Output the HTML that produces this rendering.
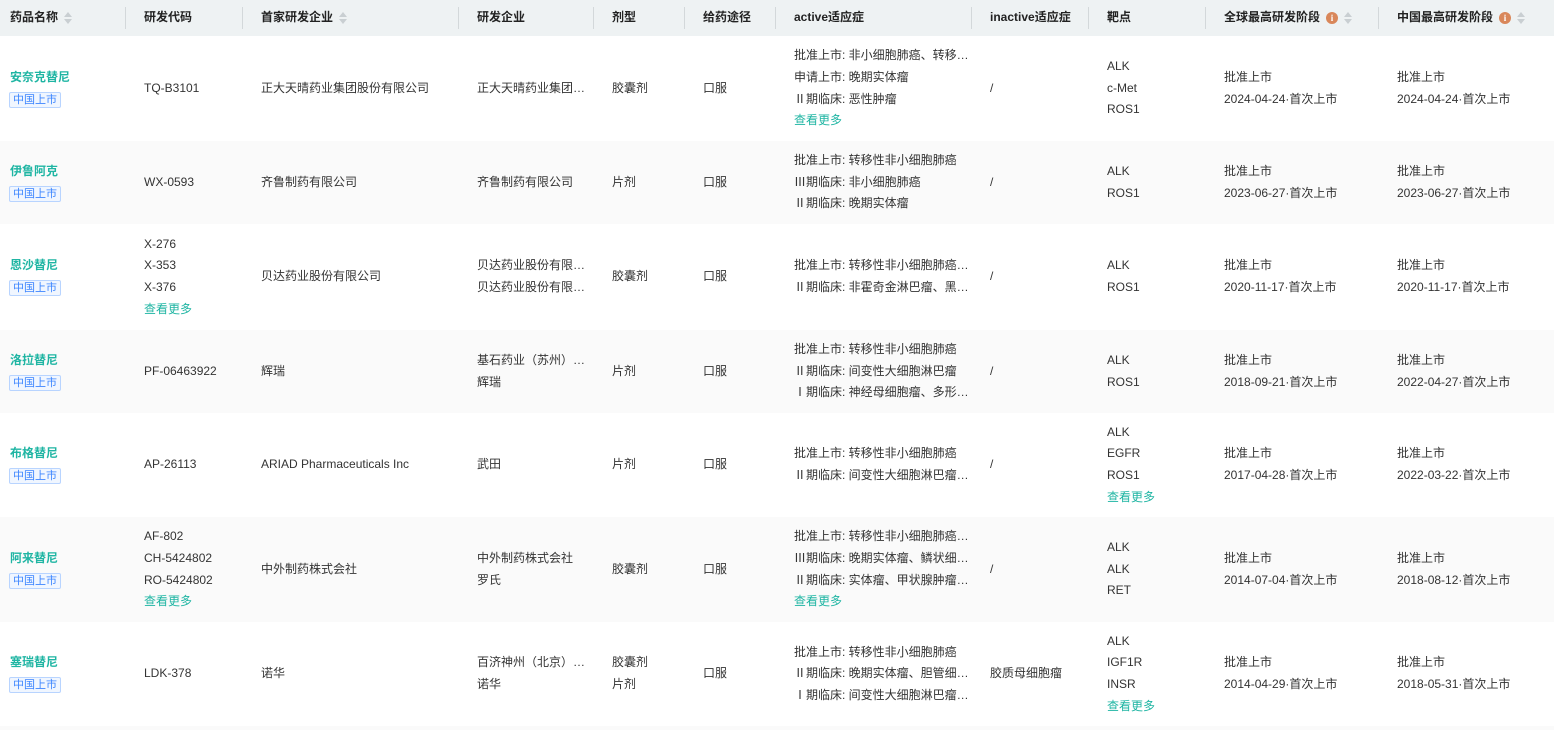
<!DOCTYPE html>
<html><head><meta charset="utf-8"><style>
*{box-sizing:border-box;margin:0;padding:0}
body{width:1554px;height:730px;overflow:hidden;background:#fafafa;font-family:"Liberation Sans","Noto Sans CJK SC",sans-serif;font-size:12px;color:#333}
table{border-collapse:collapse;table-layout:fixed;width:1554px}
td,th{padding:0 0 0 19px;vertical-align:middle;line-height:21.6px;white-space:nowrap;overflow:hidden;text-overflow:ellipsis;text-align:left}
td:first-child,th:first-child{padding-left:10px}
th{height:36px;background:#eef2f3;font-weight:bold;color:#222;position:relative}
th.s::before{content:"";position:absolute;left:0;top:7px;height:22px;border-left:1px solid #d3d8da}
tr.w td{background:#fff}
tr.g td{background:#fafafa}
.n{color:#1fb5a3;font-weight:bold}
.tag{display:inline-block;border:1px solid #b8d4ff;background:#f0f6ff;color:#3d86ff;font-size:11px;line-height:14px;padding:0 3px;border-radius:2px;margin-top:2px;margin-left:-1px}
.l{color:#1fb5a3}
.e{overflow:hidden;text-overflow:ellipsis;white-space:nowrap}
.sort{display:inline-block;vertical-align:middle;margin-left:6px;width:8px;height:14px;position:relative}
.sort::before{content:"";position:absolute;left:0;top:1px;border:4px solid transparent;border-bottom:5px solid #c9cfd2;border-top:0}
.sort::after{content:"";position:absolute;left:0;top:8px;border:4px solid transparent;border-top:5px solid #c9cfd2;border-bottom:0}
.i{display:inline-block;vertical-align:middle;width:12px;height:12px;border-radius:50%;background:#d9875a;color:#fff;font-size:9px;line-height:12px;text-align:center;margin-left:6px;font-family:"Liberation Serif",serif;font-weight:bold}
</style></head><body>
<table>
<colgroup><col style="width:125px"><col style="width:117px"><col style="width:216px"><col style="width:135px"><col style="width:91px"><col style="width:91px"><col style="width:196px"><col style="width:117px"><col style="width:117px"><col style="width:173px"><col style="width:176px"></colgroup>
<tr><th>药品名称<span class="sort"></span></th><th class="s">研发代码</th><th class="s">首家研发企业<span class="sort"></span></th><th class="s">研发企业</th><th class="s">剂型</th><th class="s">给药途径</th><th class="s">active适应症</th><th class="s">inactive适应症</th><th class="s">靶点</th><th class="s">全球最高研发阶段<span class="i">i</span><span class="sort"></span></th><th class="s">中国最高研发阶段<span class="i">i</span><span class="sort"></span></th></tr>

<tr class="w" style="height:105px"><td><div class="n">安奈克替尼</div><span class="tag">中国上市</span></td><td>TQ-B3101</td><td>正大天晴药业集团股份有限公司</td><td><div class="e">正大天晴药业集团股份有限公司</div></td><td>胶囊剂</td><td>口服</td><td><div class="e">批准上市: 非小细胞肺癌、转移性非小细胞肺癌</div><div>申请上市: 晚期实体瘤</div><div>Ⅱ期临床: 恶性肿瘤</div><div class="l">查看更多</div></td><td>/</td><td>ALK<br>c-Met<br>ROS1</td><td>批准上市<br>2024-04-24·首次上市</td><td>批准上市<br>2024-04-24·首次上市</td></tr>

<tr class="g" style="height:83px"><td><div class="n">伊鲁阿克</div><span class="tag">中国上市</span></td><td>WX-0593</td><td>齐鲁制药有限公司</td><td>齐鲁制药有限公司</td><td>片剂</td><td>口服</td><td>批准上市: 转移性非小细胞肺癌<br>Ⅲ期临床: 非小细胞肺癌<br>Ⅱ期临床: 晚期实体瘤</td><td>/</td><td>ALK<br>ROS1</td><td>批准上市<br>2023-06-27·首次上市</td><td>批准上市<br>2023-06-27·首次上市</td></tr>

<tr class="w" style="height:106px"><td><div class="n">恩沙替尼</div><span class="tag">中国上市</span></td><td>X-276<br>X-353<br>X-376<div class="l">查看更多</div></td><td>贝达药业股份有限公司</td><td><div class="e">贝达药业股份有限公司</div><div class="e">贝达药业股份有限公司</div></td><td>胶囊剂</td><td>口服</td><td><div class="e">批准上市: 转移性非小细胞肺癌、非小细胞肺癌</div><div class="e">Ⅱ期临床: 非霍奇金淋巴瘤、黑色素瘤</div></td><td>/</td><td>ALK<br>ROS1</td><td>批准上市<br>2020-11-17·首次上市</td><td>批准上市<br>2020-11-17·首次上市</td></tr>

<tr class="g" style="height:83px"><td><div class="n">洛拉替尼</div><span class="tag">中国上市</span></td><td>PF-06463922</td><td>辉瑞</td><td><div class="e">基石药业（苏州）有限公司</div><div>辉瑞</div></td><td>片剂</td><td>口服</td><td><div>批准上市: 转移性非小细胞肺癌</div><div>Ⅱ期临床: 间变性大细胞淋巴瘤</div><div class="e">Ⅰ期临床: 神经母细胞瘤、多形性胶质母细胞瘤</div></td><td>/</td><td>ALK<br>ROS1</td><td>批准上市<br>2018-09-21·首次上市</td><td>批准上市<br>2022-04-27·首次上市</td></tr>

<tr class="w" style="height:104px"><td><div class="n">布格替尼</div><span class="tag">中国上市</span></td><td>AP-26113</td><td>ARIAD Pharmaceuticals Inc</td><td>武田</td><td>片剂</td><td>口服</td><td><div>批准上市: 转移性非小细胞肺癌</div><div class="e">Ⅱ期临床: 间变性大细胞淋巴瘤、非小细胞肺癌</div></td><td>/</td><td>ALK<br>EGFR<br>ROS1<div class="l">查看更多</div></td><td>批准上市<br>2017-04-28·首次上市</td><td>批准上市<br>2022-03-22·首次上市</td></tr>

<tr class="g" style="height:105px"><td><div class="n">阿来替尼</div><span class="tag">中国上市</span></td><td>AF-802<br>CH-5424802<br>RO-5424802<div class="l">查看更多</div></td><td>中外制药株式会社</td><td>中外制药株式会社<br>罗氏</td><td>胶囊剂</td><td>口服</td><td><div class="e">批准上市: 转移性非小细胞肺癌、非小细胞肺癌</div><div class="e">Ⅲ期临床: 晚期实体瘤、鳞状细胞癌</div><div class="e">Ⅱ期临床: 实体瘤、甲状腺肿瘤、肺癌</div><div class="l">查看更多</div></td><td>/</td><td>ALK<br>ALK<br>RET</td><td>批准上市<br>2014-07-04·首次上市</td><td>批准上市<br>2018-08-12·首次上市</td></tr>

<tr class="w" style="height:104px"><td><div class="n">塞瑞替尼</div><span class="tag">中国上市</span></td><td>LDK-378</td><td>诺华</td><td><div class="e">百济神州（北京）生物科技有限公司</div><div>诺华</div></td><td>胶囊剂<br>片剂</td><td>口服</td><td><div>批准上市: 转移性非小细胞肺癌</div><div class="e">Ⅱ期临床: 晚期实体瘤、胆管细胞癌</div><div class="e">Ⅰ期临床: 间变性大细胞淋巴瘤、肺癌</div></td><td>胶质母细胞瘤</td><td>ALK<br>IGF1R<br>INSR<div class="l">查看更多</div></td><td>批准上市<br>2014-04-29·首次上市</td><td>批准上市<br>2018-05-31·首次上市</td></tr>
</table>
</body></html>
